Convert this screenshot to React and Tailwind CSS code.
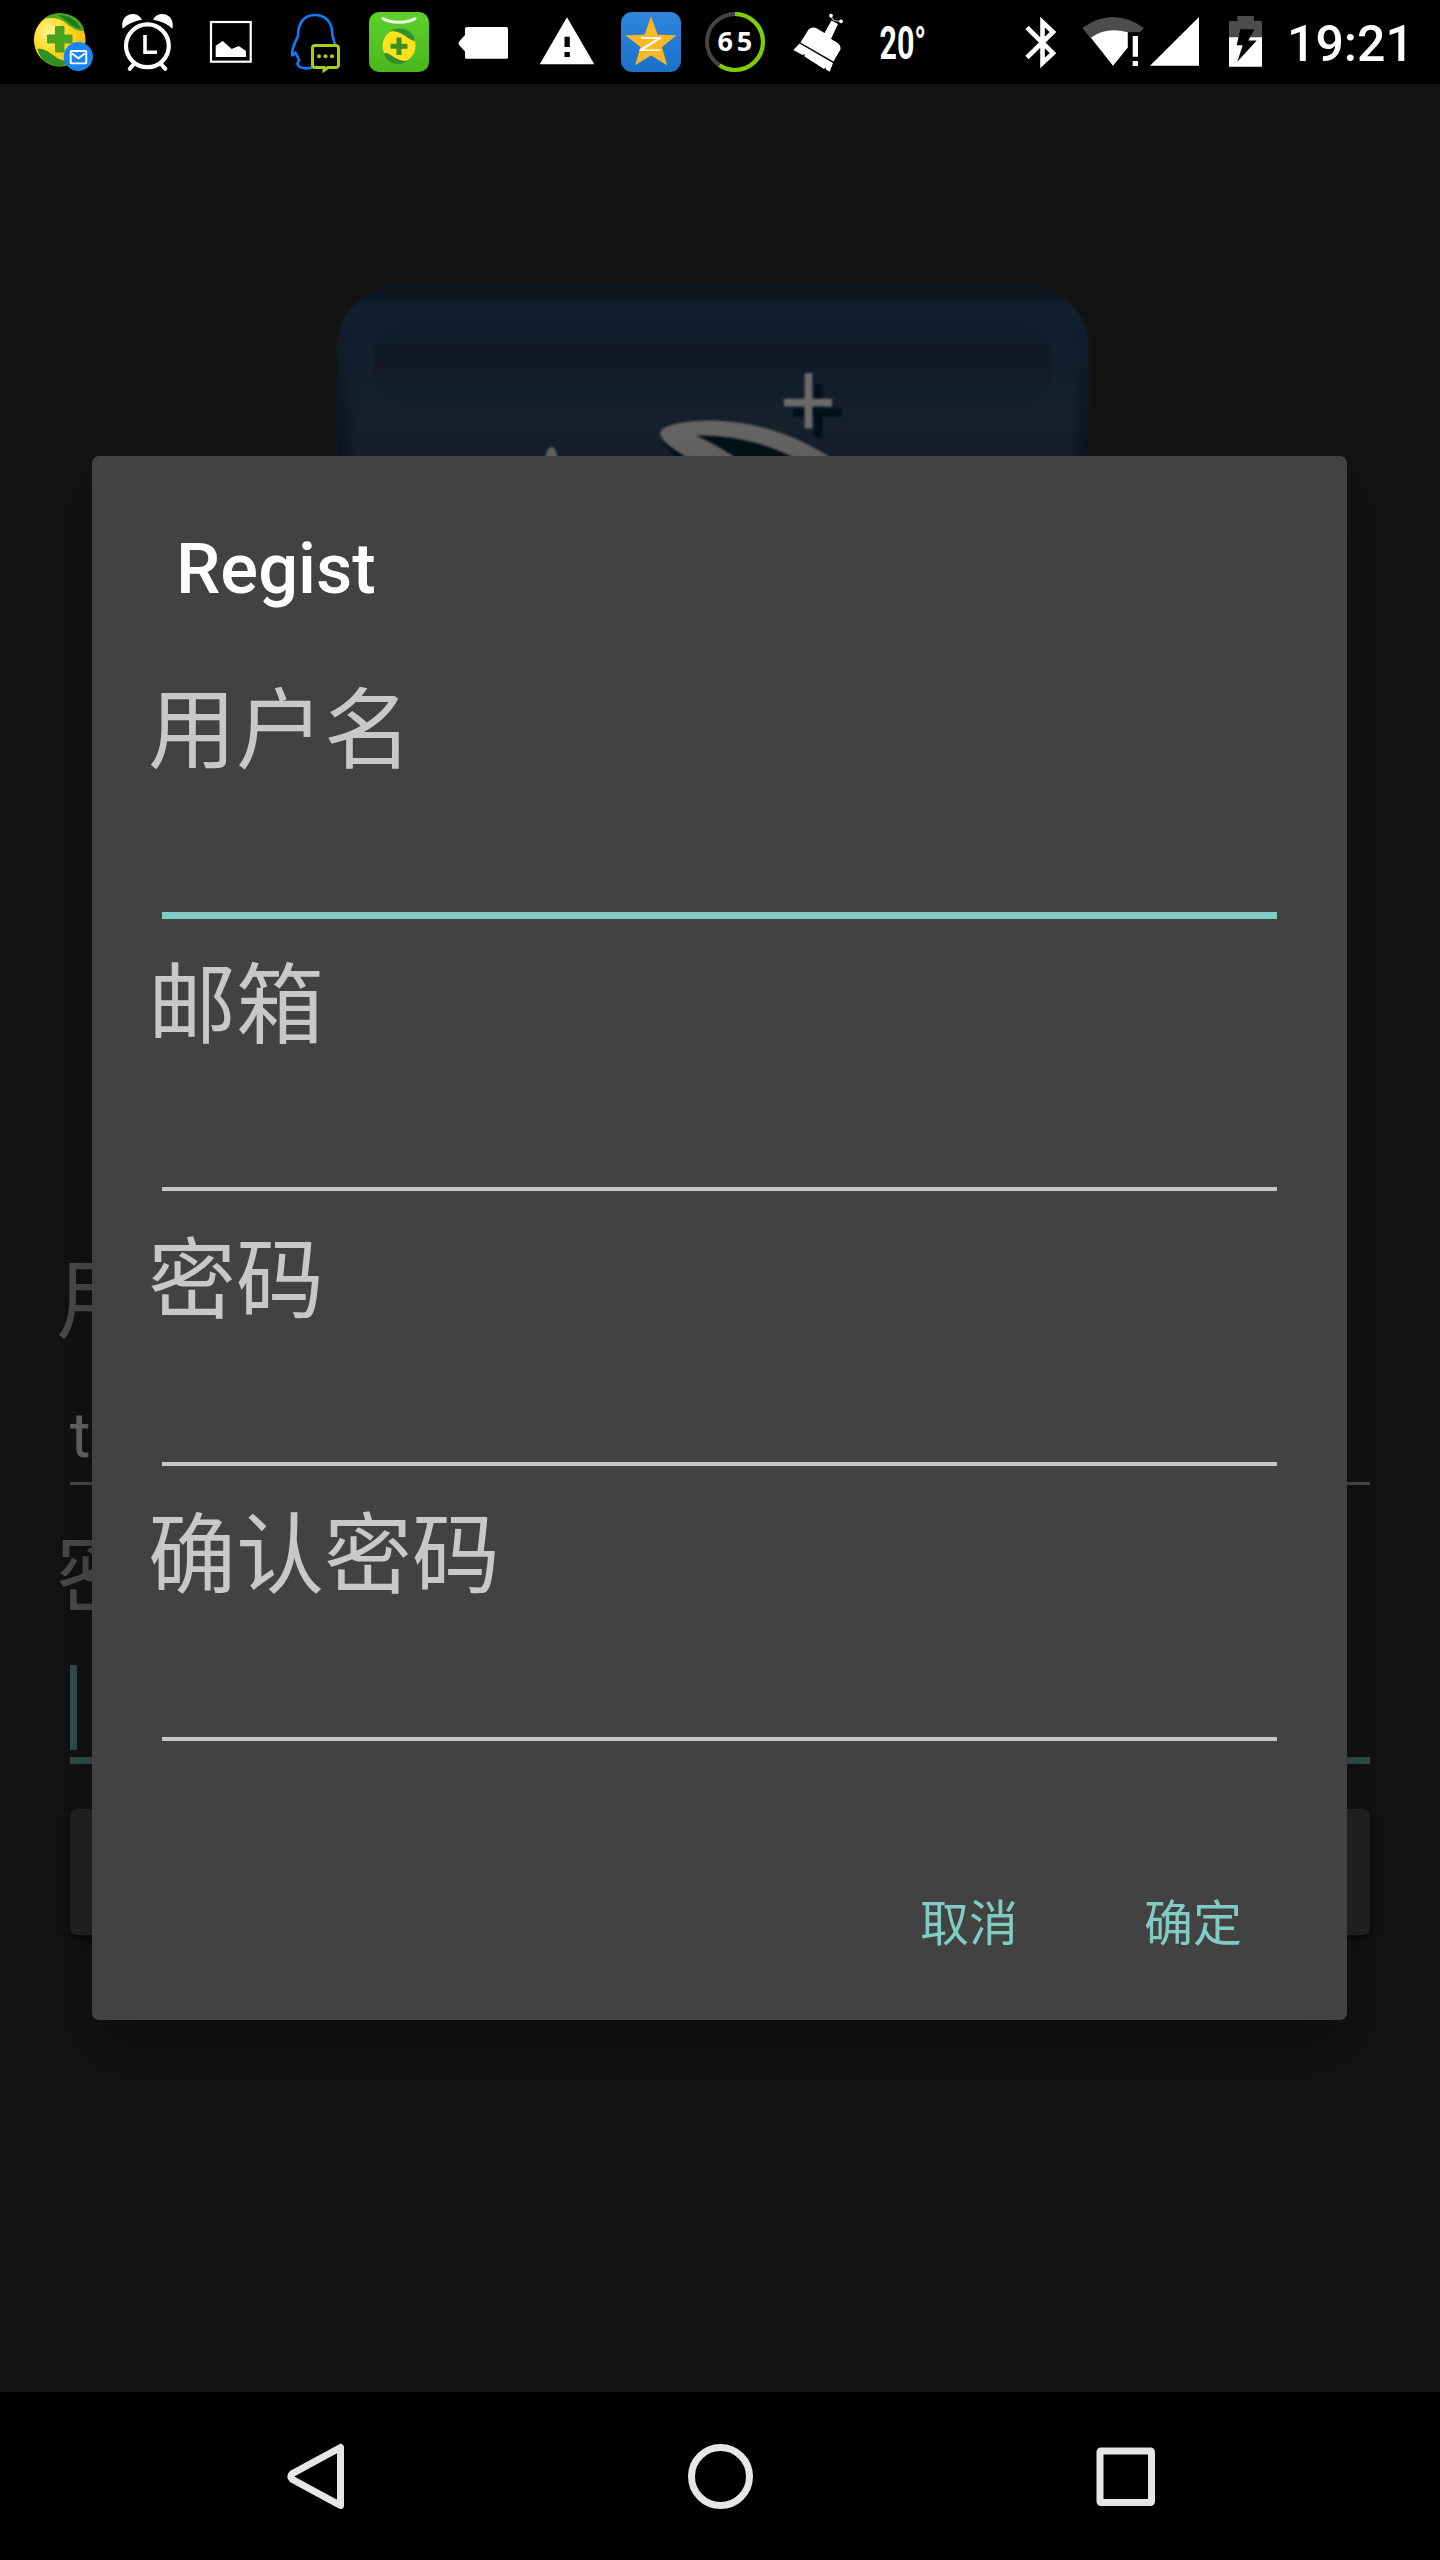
import React from "react";

const CJK = "font-['Noto_Sans_CJK_SC',sans-serif]";

function Slot({ x, w = 84, children }) {
  return (
    <svg className="h-[84px] shrink-0" width={w} height="84" viewBox={`${x} 0 ${w} 84`} fill="none">
      {children}
    </svg>
  );
}

function StatusBar() {
  return (
    <div className="flex h-[84px] shrink-0 items-center justify-between bg-black">
      <div className="flex items-center pl-[21px]">
        <Slot x={21}>
          <defs>
            <radialGradient id="orb" cx="0.3" cy="0.35" r="0.8">
              <stop offset="0" stopColor="#fff59a" />
              <stop offset="0.45" stopColor="#ffd91f" />
              <stop offset="1" stopColor="#f5b400" />
            </radialGradient>
          </defs>
          <ellipse cx="59.7" cy="40" rx="25.8" ry="26.5" fill="url(#orb)" />
          <path d="M44 18.500C55 9 80 12 84.500 31C76 32 70 26 63 21C56 17 50 18 44 18.500Z" fill="#4ea524" />
          <path d="M58 15C68 15 77 20 81 29C73 28 68 21 58 15Z" fill="#1f7a1c" />
          <path d="M37.500 49C44 48 50 53 57 58C62 61 67 61 72 62C60 70 42 67 37.500 49Z" fill="#2f8f22" />
          <path d="M55.500 26.500h8.500v8.500h8v8h-8v9h-8.500v-9h-8v-8h8z" fill="#4ba21c" stroke="#4ba21c" strokeWidth="1" strokeLinejoin="round" />
          <circle cx="78.300" cy="56.500" r="14.600" fill="#1787ee" />
          <rect x="70.700" y="51" width="15.600" height="12.400" rx="0.800" stroke="#fff" strokeWidth="1.900" />
          <path d="M72 53.500l6.500 4.800l6.500-4.800" stroke="#fff" strokeWidth="2" />
        </Slot>
        <Slot x={105}>
          <circle cx="147.400" cy="45.800" r="21.400" stroke="#fff" strokeWidth="4.200" />
          <path d="M145 35v17.300h12" stroke="#fff" strokeWidth="3.600" />
          <path d="M122.600 28.800C120.600 19 126.500 13.700 133.500 14C137.500 14.300 140.500 16.500 142 19.700C134 21 127.500 24 122.600 28.800Z" fill="#fff" />
          <path d="M172.400 28.800C174.400 19 168.500 13.700 161.500 14C157.500 14.300 154.500 16.500 153 19.700C161 21 167.500 24 172.400 28.800Z" fill="#fff" />
          <path d="M134 64l-4.300 4.800M161 64l4.300 4.800" stroke="#fff" strokeWidth="4" strokeLinecap="round" />
        </Slot>
        <Slot x={189}>
          <rect x="211" y="22" width="39.700" height="39.700" stroke="#fff" strokeWidth="2.200" />
          <path d="M215.700 57V45.700L222.700 41l9 8l7-3L246 51v6z" fill="#fff" />
        </Slot>
        <Slot x={273}>
          <path d="M335 44.500L332.300 35C332.500 22 325.500 15 314.500 15C304 15 298 23 298 36C295.500 42 291 48.500 292.300 55.500L295.500 52.500L299.300 60.500C297 62 297 65 299 66.500C303 69 309 68.300 312 67.500" stroke="#0d7dfb" strokeWidth="2.600" strokeLinejoin="round" />
          <path d="M315 45.500h21a2.500 2.500 0 0 1 2.500 2.500v17a2.500 2.500 0 0 1 -2.500 2.500h-8l-4 2.800v-2.800h-9a2.500 2.500 0 0 1 -2.500-2.500v-17a2.500 2.500 0 0 1 2.500-2.500z" fill="#000" stroke="#a3cf16" strokeWidth="3" />
          <circle cx="319" cy="56.300" r="2" fill="#a3cf16" />
          <circle cx="325.500" cy="56.300" r="2" fill="#a3cf16" />
          <circle cx="332" cy="56.300" r="2" fill="#a3cf16" />
        </Slot>
        <Slot x={357}>
          <defs>
            <linearGradient id="bag" x1="0" y1="0" x2="0" y2="1">
              <stop offset="0" stopColor="#5ed02b" />
              <stop offset="1" stopColor="#48b71d" />
            </linearGradient>
          </defs>
          <rect x="369" y="12" width="60" height="60" rx="10" fill="url(#bag)" />
          <path d="M383 18.500C390 23.500 408 23.500 415 18.500" stroke="#eaffdf" strokeWidth="3" strokeLinecap="round" />
          <circle cx="399" cy="46" r="16.500" fill="#ffe11f" />
          <path d="M390 31C400 25 414 30 415 41C407 40 404 31 390 31Z" fill="#2f8f2c" />
          <path d="M384 53C391 52 394 61 407 61C399 67 386 64 384 53Z" fill="#2f8f2c" />
          <path d="M399 37.500v17.500M390.500 46.200h17" stroke="#3c8f1c" strokeWidth="5" />
        </Slot>
        <Slot x={441}>
          <path d="M466.500 27H506.500a1.500 1.500 0 0 1 1.500 1.500V57.200a1.500 1.500 0 0 1 -1.500 1.500H466.500a1.500 1.500 0 0 1 -1.500-1.500V51.500L460 46q-3-2.700 0-5.500L465 35V28.500a1.500 1.500 0 0 1 1.500-1.500z" fill="#fff" />
        </Slot>
        <Slot x={525}>
          <path d="M567 17.300L594.300 64.300H539.700z" fill="#fff" />
          <path d="M564.500 36.700h5.300V47h-5.300zM564.500 52h5.300v5h-5.300z" fill="#000" />
        </Slot>
        <Slot x={609}>
          <defs>
            <linearGradient id="tile" x1="0" y1="0" x2="0" y2="1">
              <stop offset="0" stopColor="#2f86dc" />
              <stop offset="1" stopColor="#1b70c8" />
            </linearGradient>
          </defs>
          <rect x="621" y="12" width="60" height="60" rx="11" fill="url(#tile)" />
          <path d="M651 17.500L657.300 35L675.500 35.700L661.500 47L666.500 64.500L651 55L635.700 64.500L641 47L626.500 35.700L645 35z" fill="#fdb924" stroke="#fdb924" strokeWidth="0.800" strokeLinejoin="round" />
          <text transform="translate(637.500 51.300) skewX(-8) scale(2.050 1)" fontFamily="Roboto, sans-serif" fontSize="19.500" fontWeight="400" fill="#fff">Z</text>
        </Slot>
        <Slot x={693}>
          <circle cx="735" cy="42" r="28" stroke="#444" strokeWidth="4" />
          <circle cx="735" cy="42" r="28" stroke="#7fce00" strokeWidth="4.200" pathLength="100" strokeDasharray="59.300 100" transform="rotate(-90 735 42)" />
          <text x="717.500" y="51.300" fontFamily="'Noto Sans', sans-serif" fontSize="27" fontWeight="700" letterSpacing="3.800" fill="#fff">65</text>
        </Slot>
        <Slot x={777}>
          <path d="M831.500 20.500L838 24L831 39L837 42.500Q841 45 840.500 49.500L833.500 61.500L800.500 42.500L808.500 29.500Q812 26.300 817 28.500L824.500 33z" fill="#fff" />
          <path d="M799.500 43.500L833 63L829.700 71.700L826 69.500L825.500 67.500L824 69L804.500 56.500L804.500 54L802.500 55L793.300 50z" fill="#fff" />
          <path d="M830.500 16L834 20.500L841 21.500" stroke="#bbb" strokeWidth="1.200" />
          <circle cx="831" cy="15.700" r="1.900" fill="#fff" />
          <circle cx="841" cy="21.300" r="1.900" fill="#fff" />
        </Slot>
        <Slot x={861}>
          <text transform="translate(879.500 58.500) scale(0.660 1)" fontFamily="Roboto, sans-serif" fontSize="46" fontWeight="700" fill="#fff">20°</text>
        </Slot>
      </div>
      <div className="flex w-[420px] items-center">
        <Slot x={1020} w={56}>
          <path d="M1027 27.500L1053 53.200L1042.500 63V22L1053 32L1027 57.500" stroke="#fff" strokeWidth="4.600" />
        </Slot>
        <Slot x={1076} w={70}>
          <path d="M1082.300 28Q1113 6 1144 28L1140 32.300H1128V47.500L1113 65.700z" fill="#4d4d4d" />
          <path d="M1091 37.500Q1107 26.500 1127.700 32.300V47.500L1113 65.700z" fill="#fff" />
          <path d="M1132.700 36h5.300v20.700h-5.300zM1132.700 61h5.300v5h-5.300z" fill="#fff" />
        </Slot>
        <Slot x={1146} w={60}>
          <path d="M1199 17V65.700H1150z" fill="#fff" />
        </Slot>
        <Slot x={1206} w={80}>
          <path d="M1237.300 16h16.700v5h8v17h-33V21h8.300z" fill="#4d4d4d" />
          <path d="M1229 37.300h33V66.700h-33z" fill="#fff" />
          <path d="M1240.300 29.300H1254.500L1248.300 40.500H1256.700L1237.300 61.700L1242.700 45.300H1236.700z" fill="#000" />
        </Slot>
        <span className="ml-px mt-1 font-[Roboto,sans-serif] text-[50px] font-medium leading-[80px] text-white">19:21</span>
      </div>
    </div>
  );
}

function Artwork() {
  return (
    <svg className="ml-[336px] block h-[754px] w-[754px]" viewBox="336 283 754 754" fill="none">
      <defs>
        <linearGradient id="card" gradientUnits="userSpaceOnUse" x1="0" y1="285" x2="0" y2="485">
          <stop offset="0" stopColor="#0b131b" />
          <stop offset="0.050" stopColor="#0c151f" />
          <stop offset="0.100" stopColor="#111e2e" />
          <stop offset="0.350" stopColor="#121f2e" />
          <stop offset="0.700" stopColor="#16212c" />
          <stop offset="1" stopColor="#171e2b" />
        </linearGradient>
        <linearGradient id="gloss" gradientUnits="userSpaceOnUse" x1="0" y1="322" x2="0" y2="404">
          <stop offset="0" stopColor="#111b28" stopOpacity="0" />
          <stop offset="0.450" stopColor="#111926" />
          <stop offset="0.600" stopColor="#121a27" />
          <stop offset="1" stopColor="#151e2b" stopOpacity="0" />
        </linearGradient>
        <linearGradient id="edge" x1="0" y1="0" x2="1" y2="0">
          <stop offset="0" stopColor="#0b1320" />
          <stop offset="0.010" stopColor="#0b1320" stopOpacity="0.800" />
          <stop offset="0.024" stopColor="#0b1320" stopOpacity="0" />
          <stop offset="0.976" stopColor="#0b1320" stopOpacity="0" />
          <stop offset="0.990" stopColor="#0b1320" stopOpacity="0.800" />
          <stop offset="1" stopColor="#0b1320" />
        </linearGradient>
        <linearGradient id="fade" x1="0" y1="0" x2="0" y2="1">
          <stop offset="0.060" stopColor="#000" />
          <stop offset="0.220" stopColor="#fff" />
        </linearGradient>
        <mask id="edgeMask">
          <rect x="336" y="283" width="754" height="754" fill="url(#fade)" />
        </mask>
        <filter id="soft" colorInterpolationFilters="sRGB">
          <feGaussianBlur stdDeviation="1.200" />
        </filter>
      </defs>
      <rect x="337" y="285" width="752" height="751" rx="62" fill="url(#card)" filter="url(#soft)" />
      <rect x="337" y="285" width="752" height="751" rx="62" fill="url(#edge)" mask="url(#edgeMask)" />
      <rect x="374" y="322" width="678" height="82" rx="34" fill="url(#gloss)" filter="url(#soft)" />
      <g filter="url(#soft)">
        <path d="M818.500 384v54M793 412.500h49" stroke="#021018" strokeWidth="8" />
        <path d="M808.500 373v55.500M784 402.700h48" stroke="#6a6a6a" strokeWidth="7.800" />
        <path d="M662 442L680 462H700z" fill="#021018" />
        <path d="M695 435C735 434 775 446 800 462H740z" fill="#021018" />
        <path d="M694 462C680 453 663 444 660 434C660 425 685 420 715 420.500C760 422 800 437 838 462H803C775 447 740 435 696 435.500C712 443 725 450 742 462Z" fill="#656565" />
        <ellipse cx="551.500" cy="462" rx="6.500" ry="15" fill="#666" />
      </g>
    </svg>
  );
}

function LoginScreen() {
  return (
    <div className="flex h-full flex-col pt-[199px]">
      <Artwork />
      <div className="mt-[204px] flex flex-col px-14">
        <div className={`${CJK} h-[103px] text-[88px] leading-[103px] text-[#4d4d4d]`}>用</div>
        <div className="mx-[14px] flex h-[141px] items-end border-b-[3px] border-[#4d4d4d] pb-[9px]">
          <span className="font-[Roboto,sans-serif] text-[63px] leading-[74px] text-[#686868]">t</span>
        </div>
        <div className={`${CJK} mt-[31px] h-[103px] text-[88px] leading-[103px] text-[#4d4d4d]`}>密</div>
        <div className="mx-[14px] flex h-[145px] items-end border-b-[7px] border-[#33504d] pb-[7px]">
          <div className="h-[85px] w-[7px] bg-[#33504d]" />
        </div>
        <button className="mx-[14px] mt-[45px] h-[126px] rounded-[7px] bg-[#242424] shadow-[0_6px_8px_rgba(0,0,0,0.35)]" />
      </div>
    </div>
  );
}

function Field({ label, active }) {
  return (
    <label className="flex h-[275px] flex-col">
      <span className={`${CJK} h-[103px] text-[88px] leading-[101px] text-[#c8c8c8]`}>{label}</span>
      <span className="mx-[14px] flex h-[144.500px] flex-col justify-end">
        {active ? <span className="mb-[0.500px] h-[7px] bg-[#80cbc4]" /> : null}
      </span>
      {active ? null : <span className="mx-[14px] -mt-[7.500px] h-[3.500px] bg-[#c6c6c6]" />}
    </label>
  );
}

function RegisterDialog() {
  return (
    <div className="flex h-[1564px] w-[1255px] flex-col rounded-[7px] bg-[#424242] shadow-[0_28px_60px_rgba(0,0,0,0.35)]">
      <h1 className="h-[216px] pl-[84px] pt-[72px] font-[Roboto,sans-serif] text-[70.500px] font-medium leading-[82px] text-white">Regist</h1>
      <div className="flex flex-col px-14">
        <Field label="用户名" active />
        <Field label="邮箱" />
        <Field label="密码" />
        <Field label="确认密码" />
      </div>
      <div className={`${CJK} mt-[112px] flex justify-end gap-[126px] pr-[105px] text-[49px] leading-[72px] text-[#80cbc4]`}>
        <button>取消</button>
        <button>确定</button>
      </div>
    </div>
  );
}

function NavBar() {
  return (
    <div className="flex h-[168px] shrink-0 items-center justify-center gap-[324px] bg-black">
      <svg width="80" height="80" viewBox="276 2436 80 80" fill="none">
        <path d="M340.500 2447.500V2505.500L292.500 2479.500Q289 2476.500 292.500 2473.500Z" stroke="#e6e6e6" strokeWidth="7" strokeLinejoin="round" />
      </svg>
      <svg width="80" height="80" viewBox="680 2436 80 80" fill="none">
        <circle cx="720.500" cy="2476.500" r="29" stroke="#e6e6e6" strokeWidth="7" />
      </svg>
      <svg width="80" height="80" viewBox="1084 2436 80 80" fill="none">
        <rect x="1100" y="2451" width="51.500" height="51.500" rx="1" stroke="#e6e6e6" strokeWidth="7" />
      </svg>
    </div>
  );
}

export default function App() {
  return (
    <div className="flex h-[2560px] w-[1440px] flex-col overflow-hidden bg-black">
      <StatusBar />
      <main className="relative h-[2308px] shrink-0 overflow-hidden bg-[#131313]">
        <LoginScreen />
        <div className="absolute inset-0 flex items-center pl-[92px]">
          <RegisterDialog />
        </div>
      </main>
      <NavBar />
    </div>
  );
}
